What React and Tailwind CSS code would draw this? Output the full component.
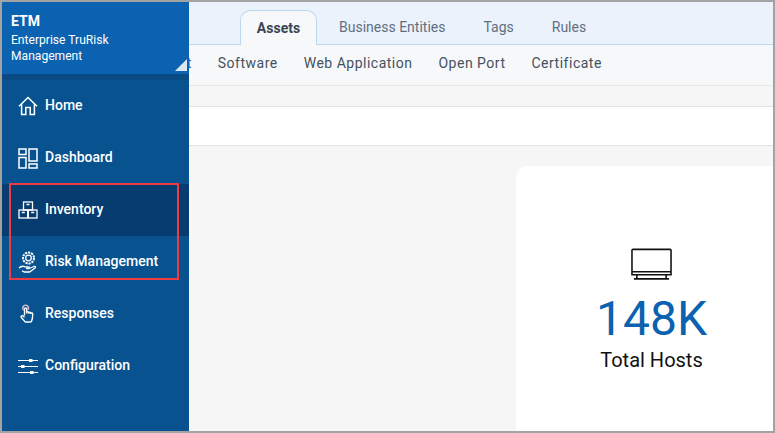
const stroke = { fill: "none", stroke: "currentColor", strokeWidth: 1.5 };

const HomeIcon = () => (
  <svg width="20" height="20" viewBox="0 0 20 20" {...stroke}>
    <path d="M1 10.2 10 1.500l9 8.700M3.600 8v10.500h4.200v-6.900h4.400v6.900h4.200V8" />
  </svg>
);
const DashboardIcon = () => (
  <svg width="20" height="21" viewBox="0 0 20 21" {...stroke}>
    <rect x="1" y="1" width="7" height="5.500" />
    <rect x="1" y="9.500" width="7" height="10.500" />
    <rect x="11" y="1" width="8" height="12" />
    <rect x="11" y="16" width="8" height="4" />
  </svg>
);
const InventoryIcon = () => (
  <svg width="20" height="18" viewBox="0 0 20 18" fill="none" stroke="currentColor" strokeWidth="1.300">
    <rect x="5.500" y="1" width="9" height="8" />
    <rect x="1" y="9" width="8.700" height="8" />
    <rect x="10.300" y="9" width="8.700" height="8" />
    <path d="M8.500 3.500h3M3.800 11.500h3M13.200 11.500h3" />
  </svg>
);
const RiskIcon = () => (
  <svg width="20" height="22" viewBox="0 0 20 22" fill="none" stroke="currentColor" strokeWidth="1.300">
    <circle cx="10.500" cy="7" r="5.500" strokeDasharray="2.200 0.900" strokeWidth="2" />
    <circle cx="10.500" cy="7" r="2.800" />
    <path d="M1 17c2-2 4-2.200 6-1.200h3.500c1.200 0 1.200 1.700 0 1.700H8m3 0 5-2c1.500-.4 2 .8 1 1.600L11.500 21H6.500L4 19.800" />
  </svg>
);
const ResponsesIcon = () => (
  <svg width="15" height="22" viewBox="0 0 16 21" fill="none" stroke="currentColor" strokeWidth="1.500">
    <path d="M3.500 6.500C1.800 3.500 4 1 6 1s3.800 2.200 2.800 4.600" stroke="#f3c7dc" />
    <path d="M4.800 12V5.200c0-1.600 2.400-1.600 2.400 0V10m0-1c0-1.300 2.200-1.300 2.200 0v1.200m0-.6c0-1.200 2.100-1.200 2.100 0v1m0-.3c0-1.100 2-1.100 2 0 0 3 .2 5-1.200 7.800-.3.600-.6 1-1.300 1H6.400c-.8 0-1.300-.5-1.800-1.300L1.400 14.200c-.8-1.400.9-2.600 2-1.500l1.400 1.400" />
  </svg>
);
const ConfigIcon = () => (
  <svg width="20" height="17" viewBox="0 0 20 17" fill="none" stroke="currentColor" strokeWidth="1.100">
    <path d="M0 2.500h20M0 8.500h20M0 14.500h20" />
    <rect x="11" y="1" width="3.500" height="3" fill="currentColor" stroke="none" />
    <rect x="3" y="7" width="3.500" height="3" fill="currentColor" stroke="none" />
    <rect x="12" y="13" width="3.500" height="3" fill="currentColor" stroke="none" />
  </svg>
);
const MonitorIcon = () => (
  <svg width="41" height="33" viewBox="0 0 42 33" fill="none" stroke="#111" strokeWidth="1.600">
    <path d="M2 1h38a1 1 0 0 1 1 1v25H1V2a1 1 0 0 1 1-1Z" />
    <path d="M1 24h40M6 27v4M36 27v4M3 31.200h36" />
  </svg>
);

const items = [
  ["Home", HomeIcon],
  ["Dashboard", DashboardIcon],
  ["Inventory", InventoryIcon, true],
  ["Risk Management", RiskIcon],
  ["Responses", ResponsesIcon],
  ["Configuration", ConfigIcon],
];

export default function App() {
  return (
    <div className="relative flex h-[433px] w-[775px] overflow-hidden border-2 border-[#a3a3a3] bg-[#f6f6f6] font-['Roboto',sans-serif]">
      <aside className="relative z-10 flex w-[187px] shrink-0 flex-col bg-[#07528f] text-white">
        <div className="relative h-[72px] bg-[#0a62b0] pl-[9px] pt-[10px]">
          <div className="text-[14px] font-bold leading-[18px]">ETM</div>
          <div className="mt-[2px] w-[125px] text-[12.100px] leading-[16px]">Enterprise TruRisk Management</div>
          <div className="absolute bottom-[3px] right-[2px] h-0 w-0 border-b-[12px] border-l-[12px] border-b-[#dce7f3] border-l-transparent" />
        </div>
        <div className="h-[6px] bg-[#0a4b85]" />
        {items.map(([label, Icon, active]) => (
          <div key={label} className={`flex h-[52px] items-center text-[14px] font-medium ${active ? "bg-[#073c70]" : ""}`}>
            <span className="flex w-[43px] shrink-0 justify-center pl-[10px] pr-[2px]">
              <Icon />
            </span>
            <span className="-mt-[2px]">{label}</span>
          </div>
        ))}
      </aside>

      <main className="flex min-w-0 flex-1 flex-col overflow-hidden">
        <div className="flex h-[43px] shrink-0 items-end border-b border-[#bcd7ee] bg-[#ecf2fb] pl-[51px] text-[14px] text-[#5f6f82]">
          <div className="z-10 -mb-px flex h-[35px] w-[77px] items-center justify-center rounded-t-[10px] border border-b-0 border-[#bcd7ee] bg-[#f6f8fa] font-bold text-[#3b4552]">
            Assets
          </div>
          <div className="flex h-[34px] items-center gap-[38px] pl-[22px]">
            <span>Business Entities</span>
            <span>Tags</span>
            <span>Rules</span>
          </div>
        </div>
        <div className="flex h-[41px] shrink-0 items-start gap-[26px] whitespace-nowrap border-b border-[#e8e8e8] bg-[#f6f8fa] pt-[7.500px] text-[14px] tracking-[0.5px] text-[#46515e]">
          <span className="-ml-[29px] text-[#2f5f94]">Host</span>
          <span>Software</span>
          <span>Web Application</span>
          <span>Open Port</span>
          <span>Certificate</span>
        </div>
        <div className="h-[21px] shrink-0 border-b border-[#e2e2e2] bg-[#f6f6f6]" />
        <div className="h-[39px] shrink-0 border-b border-[#e2e2e2] bg-white" />
        <div className="flex-1 pl-[327px] pt-[20px]">
          <div className="flex h-[300px] flex-col items-center rounded-tl-[12px] bg-white pl-[14px] pt-[82px]">
            <MonitorIcon />
            <div className="mt-[10px] text-[48px] leading-[56px] text-[#0b62b0]">148K</div>
            <div className="mt-[2px] text-[20px] leading-[22px] text-[#111]">Total Hosts</div>
          </div>
        </div>
      </main>

      <div className="absolute left-[7px] top-[181px] z-20 h-[97px] w-[170px] border-2 border-[#ef3b46]" />
    </div>
  );
}
